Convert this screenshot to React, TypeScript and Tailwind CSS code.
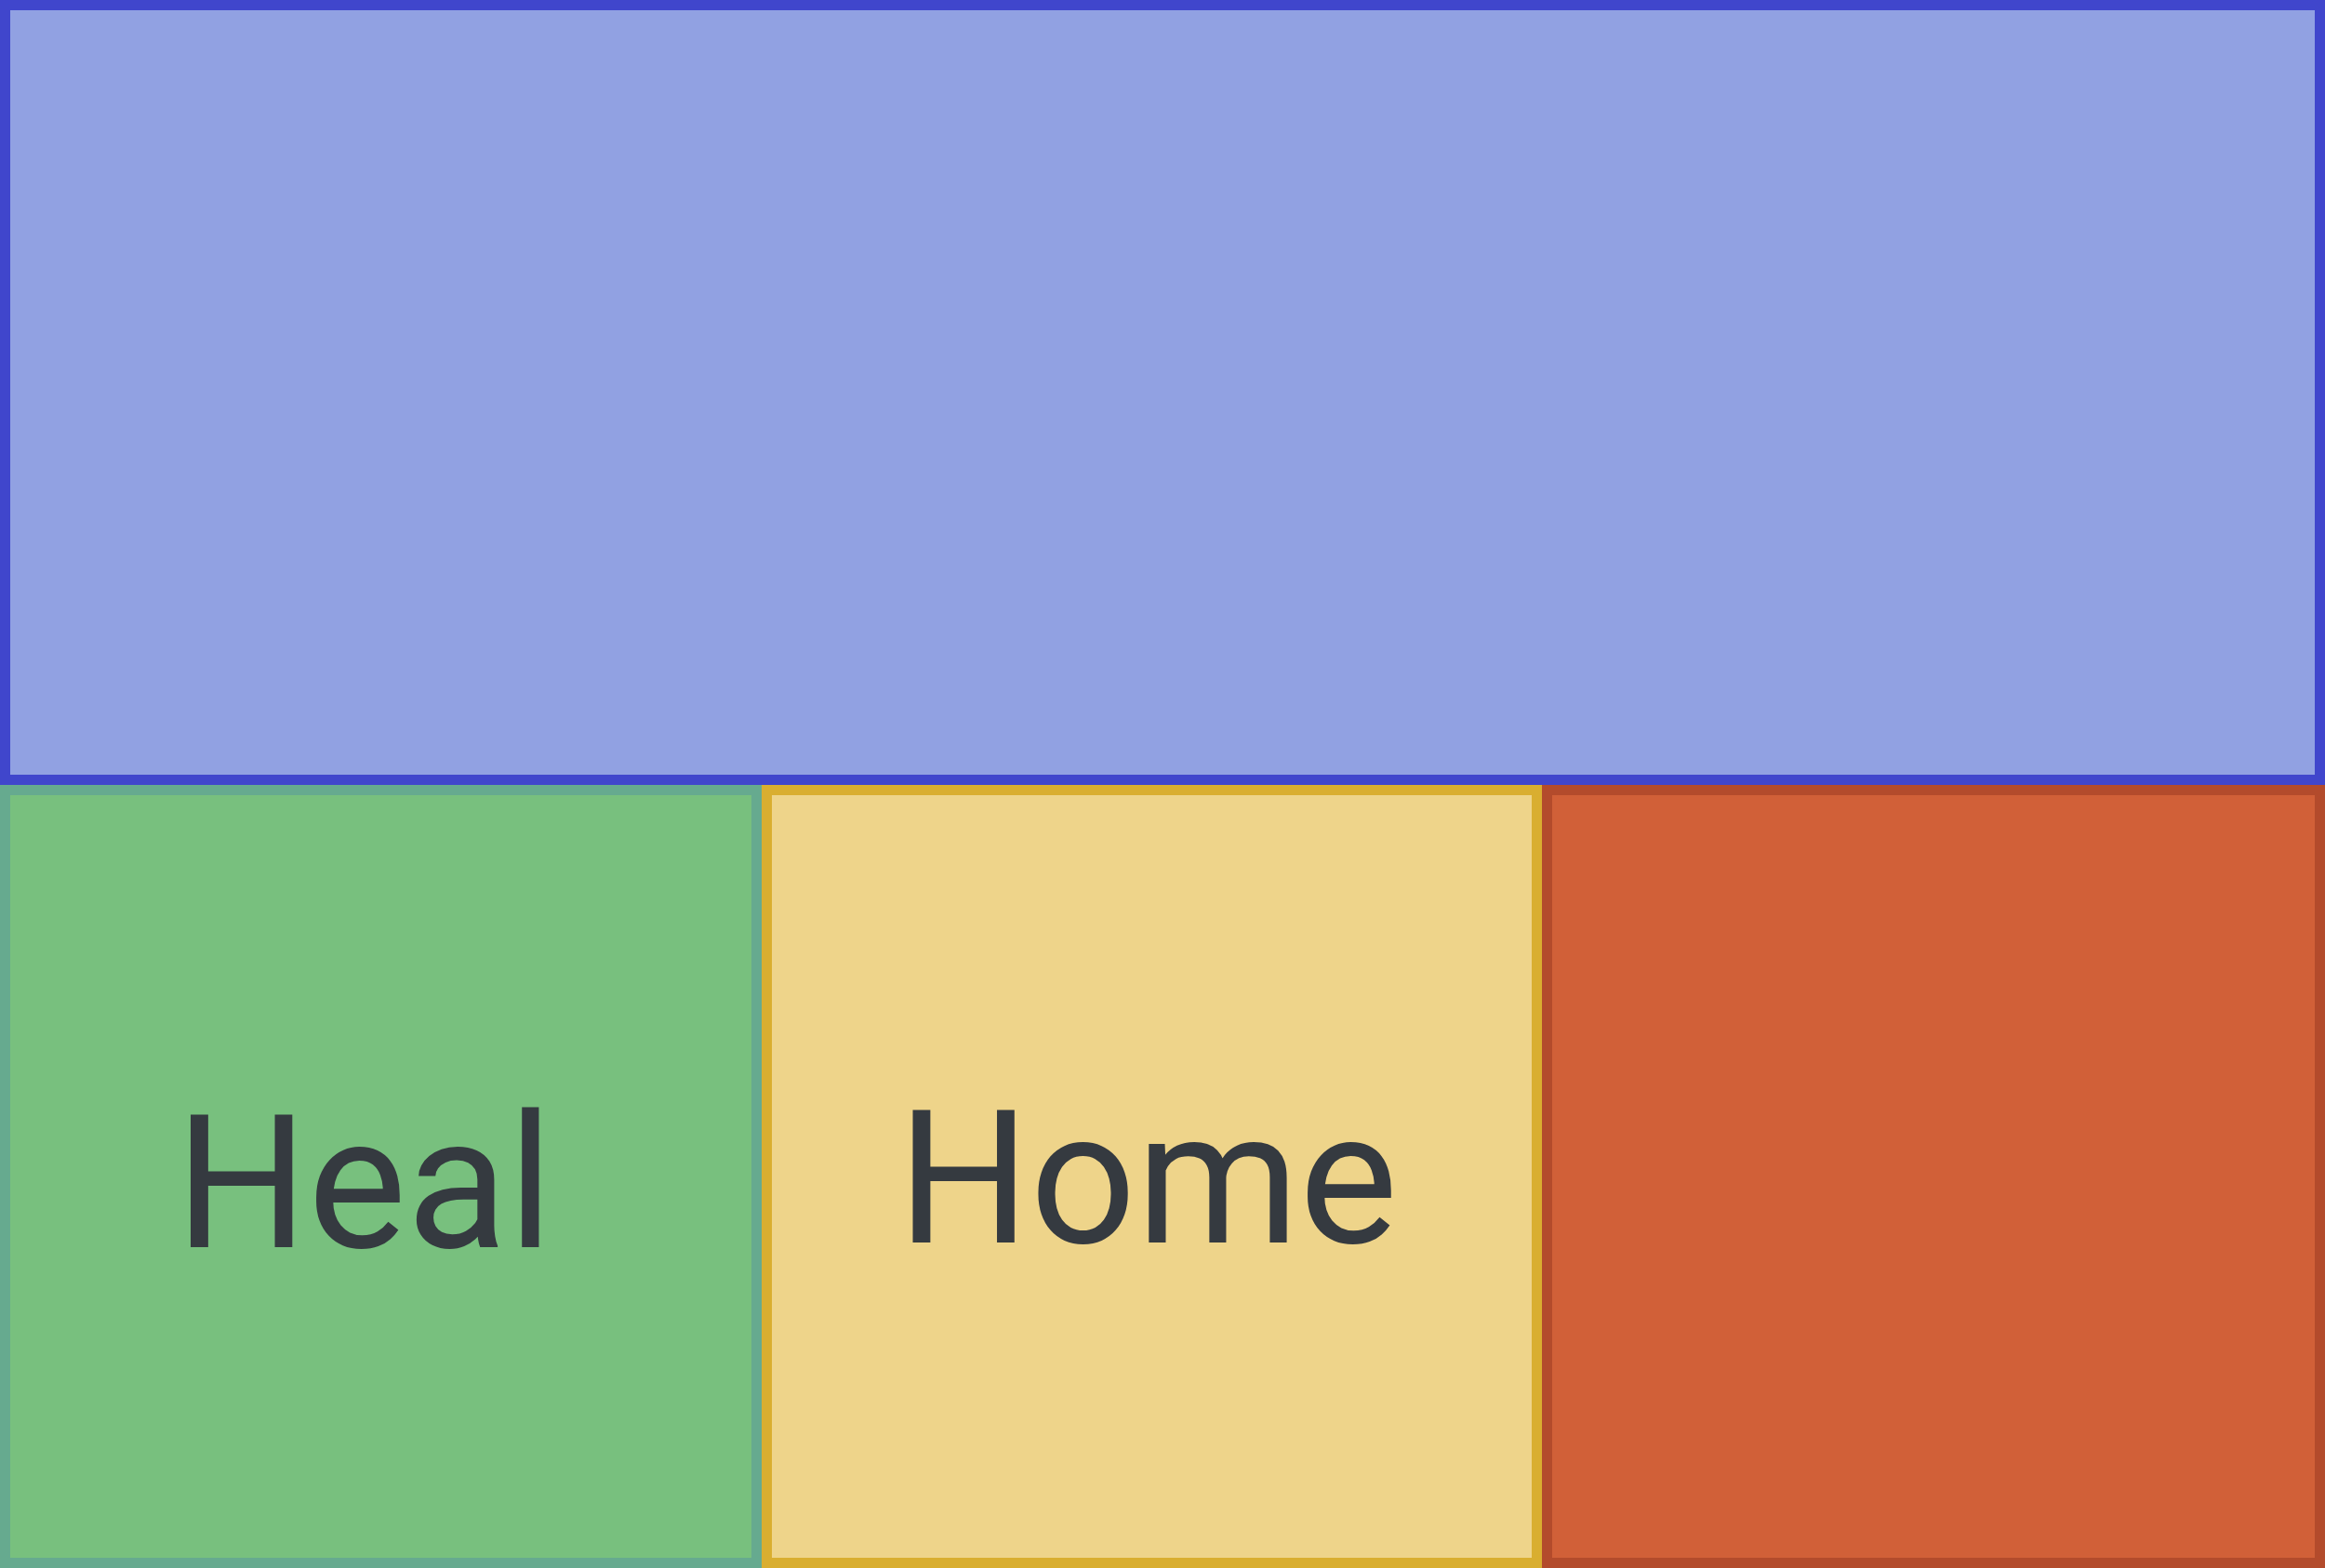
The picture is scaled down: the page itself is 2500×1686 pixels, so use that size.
export default function App() {
  return (
    <div className="w-[2500px] h-[1686px] flex flex-col overflow-hidden" style={{ fontFamily: "Roboto, 'Noto Sans', sans-serif" }}>
      <div className="h-[844px] w-full border-[11px] border-[#4046cc] bg-[#91a1e2]" />
      <div className="flex h-[842px]">
        <div className="w-[819px] h-full border-[11px] border-[#66aa8f] bg-[#78c07e] flex items-center justify-center pr-[36px] pt-[16px]">
          <span className="text-[200px] leading-none text-[#353a40]">Heal</span>
        </div>
        <div className="w-[839px] h-full border-[11px] border-[#d9ae30] bg-[#eed48a] flex items-center justify-center pr-[9px] pt-[6px]">
          <span className="text-[200px] leading-none text-[#353a40]">Home</span>
        </div>
        <div className="w-[842px] h-full border-[11px] border-[#b34b2c] bg-[#d16038]" />
      </div>
    </div>
  );
}
